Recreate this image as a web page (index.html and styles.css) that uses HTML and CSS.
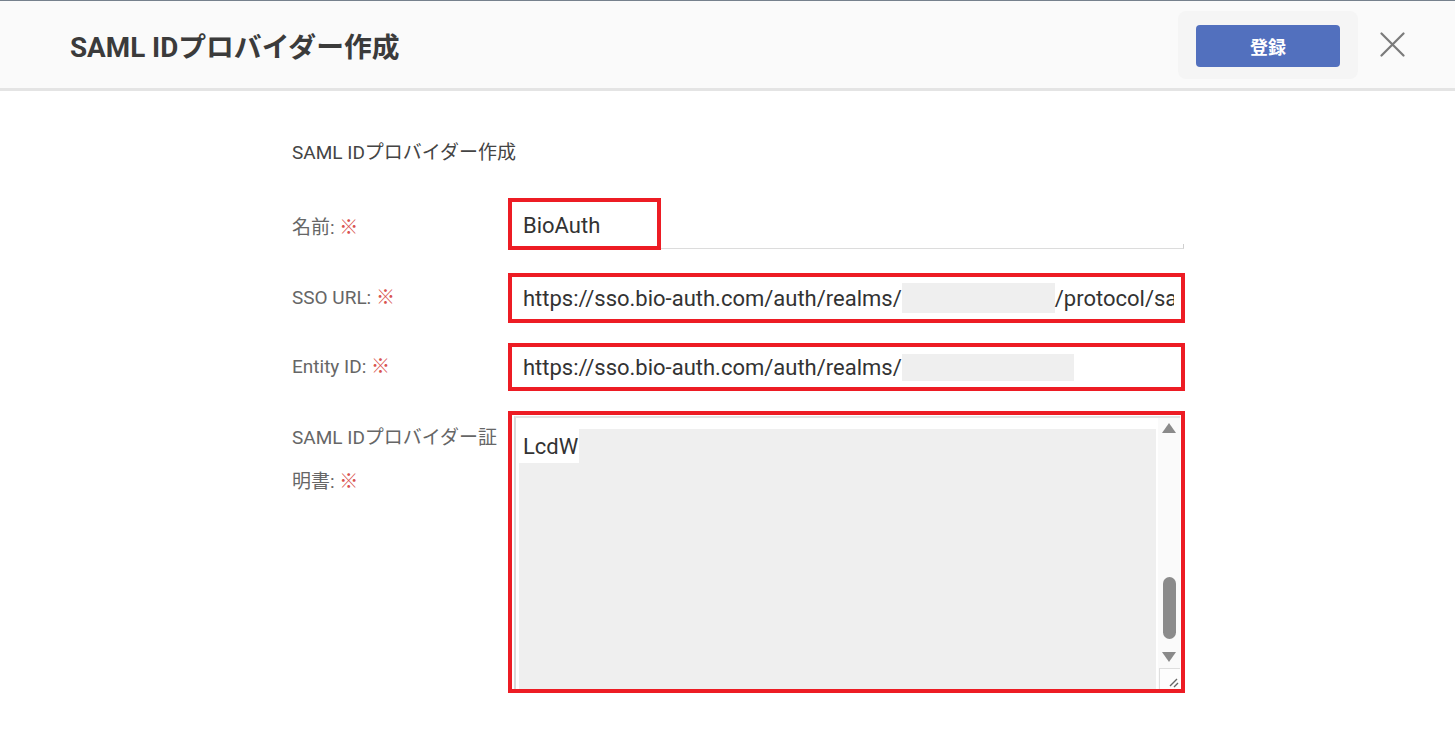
FILE: index.html
```html
<!DOCTYPE html>
<html lang="ja">
<head>
<meta charset="utf-8">
<title>SAML IDプロバイダー作成</title>
<link rel="stylesheet" href="styles.css">
</head>
<body>
<header class="topbar">
  <h1 class="topbar-title">SAML IDプロバイダー作成</h1>
  <div class="topbar-actions">
    <div class="btn-wrap"><button class="btn-primary" type="button">登録</button></div>
    <button class="btn-close" type="button" aria-label="閉じる">
      <svg width="25" height="25" viewBox="0 0 25 25"><path d="M1.5 1.5 L23.5 23.5 M23.5 1.5 L1.5 23.5" stroke="#7a7a7a" stroke-width="2.2" fill="none" stroke-linecap="round"/></svg>
    </button>
  </div>
</header>
<main class="form">
  <h2 class="section-title">SAML IDプロバイダー作成</h2>

  <div class="row row-name">
    <div class="label">名前: <span class="req">※</span></div>
    <div class="field-line">
      <div class="mark mark-name"><span class="value">BioAuth</span></div>
      <div class="underline"></div>
    </div>
  </div>

  <div class="row row-sso">
    <div class="label">SSO URL: <span class="req">※</span></div>
    <div class="mark mark-wide">
      <div class="clip"><span class="value">https://sso.bio-auth.com/auth/realms/</span><span class="redact redact-sso"></span><span class="value">/protocol/saml</span></div>
    </div>
  </div>

  <div class="row row-entity">
    <div class="label">Entity ID: <span class="req">※</span></div>
    <div class="mark mark-wide">
      <div class="clip"><span class="value">https://sso.bio-auth.com/auth/realms/</span><span class="redact redact-entity"></span></div>
    </div>
  </div>

  <div class="row row-cert">
    <div class="label label-top">SAML IDプロバイダー証明書: <span class="req">※</span></div>
    <div class="mark mark-ta">
      <div class="ta">
        <div class="ta-content"><span class="ta-text">LcdW</span></div>
        <div class="scrollbar">
          <div class="sb-arrow"><span class="tri-up"></span></div>
          <div class="sb-track"></div>
          <div class="sb-thumb"></div>
          <div class="sb-gap"></div>
          <div class="sb-arrow sb-arrow-down"><span class="tri-down"></span></div>
          <div class="sb-gap2"></div>
          <div class="sb-resizer">
            <svg width="20" height="20" viewBox="0 0 20 20"><path d="M17 10 L10 17 M18 14 L14 18" stroke="#666" stroke-width="1.4" fill="none"/></svg>
          </div>
        </div>
      </div>
    </div>
  </div>
</main>
</body>
</html>
```

FILE: styles.css
```css
* { box-sizing: border-box; }

body {
  margin: 0;
  background: #ffffff;
  font-family: Roboto, "Noto Sans CJK JP", sans-serif;
  color: #333;
}

.topbar {
  height: 91px;
  border-top: 1px solid #76818d;
  border-bottom: 3px solid #e4e4e4;
  background: #fafafa;
  display: flex;
  align-items: center;
  justify-content: space-between;
  padding: 0 50px 0 70px;
}

.topbar-title {
  margin: 0;
  font-size: 27.8px;
  font-weight: 700;
  color: #3b3b3b;
  letter-spacing: 0;
}

.topbar-actions {
  display: flex;
  align-items: center;
  gap: 22px;
}

.btn-wrap {
  padding: 14px 18px 12px;
  background: #f5f5f5;
  border-radius: 8px;
}

.btn-primary {
  display: block;
  width: 144px;
  height: 42px;
  border: none;
  border-radius: 4px;
  background: #5270be;
  color: #ffffff;
  font-family: Roboto, "Noto Sans CJK JP", sans-serif;
  font-size: 18px;
  font-weight: 700;
  cursor: pointer;
}

.btn-close {
  display: block;
  width: 25px;
  height: 25px;
  padding: 0;
  border: none;
  background: transparent;
  cursor: pointer;
}
.btn-close svg { display: block; }

.form {
  margin-left: 292px;
  width: 893px;
  padding-top: 50px;
}

.section-title {
  margin: 0 0 33px;
  font-size: 19px;
  line-height: 24px;
  font-weight: 400;
  color: #444;
}

.row {
  display: flex;
  align-items: center;
}
.row-sso { margin-top: 23px; }
.row-entity { margin-top: 20px; }
.row-cert { margin-top: 20px; align-items: flex-start; }

.label {
  width: 216px;
  flex: none;
  padding-right: 6px;
  font-size: 19px;
  line-height: 44px;
  color: #666;
}
.row-name .label { padding-top: 8px; }
.label-top { padding-top: 5px; }

.req { color: #d9534f; }

.mark {
  border: 4px solid #ed1c24;
}

.field-line {
  flex: 1;
  display: flex;
  align-items: flex-end;
  height: 52px;
}

.mark-name {
  width: 153px;
  height: 52px;
  padding: 3px 0 0 11px;
  display: flex;
  align-items: center;
}

.underline {
  flex: 1;
  height: 5px;
  margin-bottom: 1px;
  margin-right: 1px;
  border-bottom: 1px solid #dcdcdc;
  border-right: 1px solid #cfcfcf;
}

.value {
  flex: none;
  font-size: 22px;
  color: #333;
  white-space: nowrap;
}

.mark-wide {
  flex: 1;
  min-width: 0;
  display: flex;
  align-items: center;
  padding: 0 7px 0 11px;
}
.row-sso .mark-wide { height: 50px; }
.row-entity .mark-wide { height: 48px; }

.clip {
  flex: 1;
  min-width: 0;
  overflow: hidden;
  white-space: nowrap;
  display: flex;
  align-items: center;
}

.redact {
  flex: none;
  display: inline-block;
  background: #efefef;
}
.redact-sso { width: 153px; height: 30px; }
.redact-entity { width: 172px; height: 27px; }

.mark-ta {
  flex: 1;
  min-width: 0;
  height: 282px;
  padding: 1px 1px 0 2px;
}

.ta {
  height: 100%;
  display: flex;
  border-left: 2px solid #d9d9d9;
  border-top: 2px solid #e3e3e3;
  padding: 11px 0 0 3px;
}

.ta-content {
  flex: 1;
  background: #efefef;
  margin-right: 2px;
}

.ta-text {
  display: inline-block;
  background: #ffffff;
  height: 34px;
  padding: 1px 1px 0 4px;
  font-size: 22px;
  line-height: 34px;
  color: #333;
}

.scrollbar {
  width: 22px;
  margin-top: -11px;
  background: #fafafa;
  display: flex;
  flex-direction: column;
  align-items: center;
}

.sb-arrow {
  height: 20px;
  width: 100%;
  display: flex;
  align-items: center;
  justify-content: center;
}
.sb-arrow-down { height: 16px; }

.tri-up {
  width: 0;
  height: 0;
  border-left: 7px solid transparent;
  border-right: 7px solid transparent;
  border-bottom: 10px solid #8a8a8a;
}
.tri-down {
  width: 0;
  height: 0;
  border-left: 7px solid transparent;
  border-right: 7px solid transparent;
  border-top: 10px solid #8a8a8a;
}

.sb-track { flex: 1; }

.sb-thumb {
  width: 13px;
  height: 62px;
  border-radius: 7px;
  background: #8b8b8b;
}

.sb-gap { height: 10px; }
.sb-gap2 { height: 3px; }

.sb-resizer {
  width: 21px;
  height: 21px;
  align-self: flex-end;
  border-left: 1px solid #dedede;
  border-top: 1px solid #dedede;
  background: #fdfdfd;
}
.sb-resizer svg { display: block; }
```
